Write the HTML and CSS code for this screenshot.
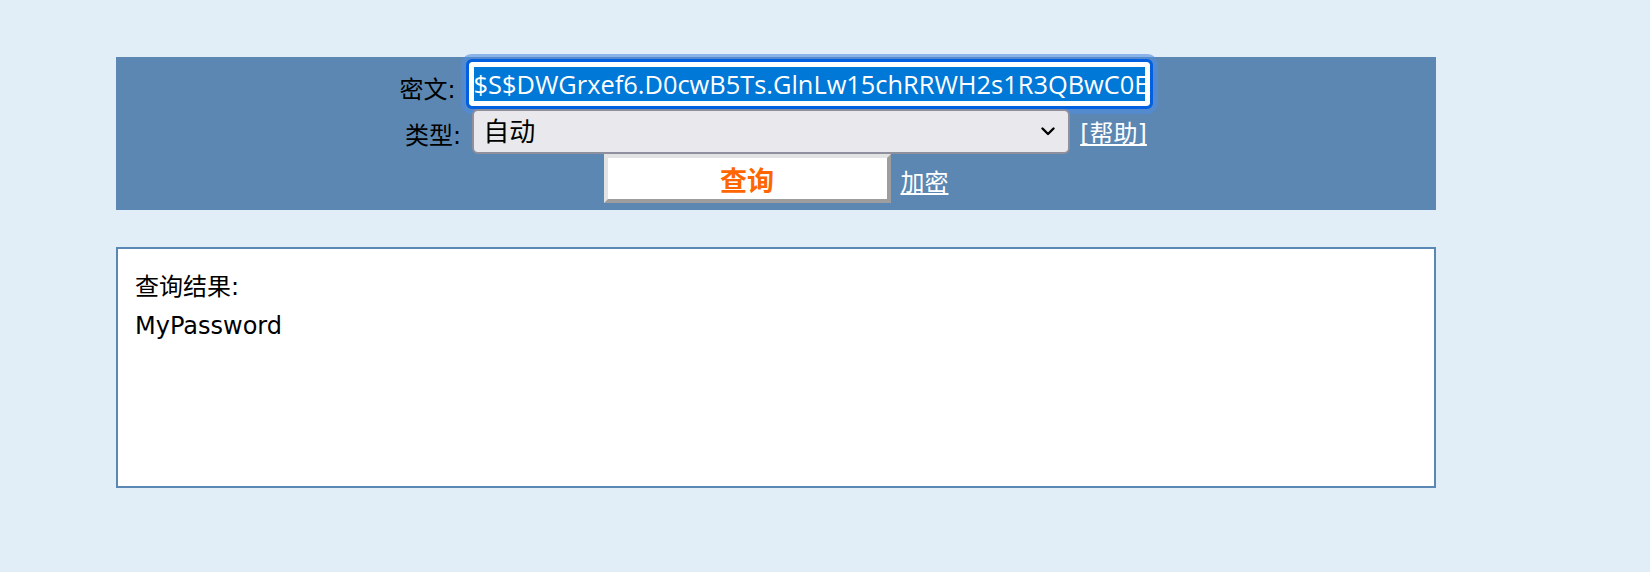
FILE: index.html
```html
<!DOCTYPE html>
<html lang="zh-CN">
<head>
<meta charset="utf-8">
<title>密文查询</title>
<link rel="stylesheet" href="styles.css">
</head>
<body>
<div class="page">
  <form class="panel">
    <div class="row">
      <label class="lbl">密文:</label>
      <input class="cipher" type="text" value="$S$DWGrxef6.D0cwB5Ts.GlnLw15chRRWH2s1R3QBwC0E7bNq">
    </div>
    <div class="row">
      <label class="lbl lbl-type">类型:</label>
      <span class="select-wrap">
        <select class="type"><option>自动</option></select>
        <svg class="chev" width="14" height="9" viewBox="0 0 14 9"><path d="M1.5 1.5 L7 7 L12.5 1.5" fill="none" stroke="#000" stroke-width="2.4" stroke-linecap="round" stroke-linejoin="round"/></svg>
      </span>
      <a class="help" href="#">[帮助]</a>
    </div>
    <div class="row">
      <button class="query" type="button">查询</button>
      <a class="enc" href="#">加密</a>
    </div>
  </form>
  <div class="result">查询结果:<br>MyPassword</div>
</div>
</body>
</html>
```
FILE: styles.css
```css
body {
  margin: 0;
  background: #e1eef7;
  font-family: "DejaVu Sans", "Noto Sans CJK SC", sans-serif;
  font-size: 24px;
  color: #000;
}
.page {
  width: 1320px;
  margin: 57px 0 0 116px;
}
.panel {
  background: #5b87b2;
  padding: 2px 0 7px;
  display: flex;
  flex-direction: column;
  align-items: center;
  margin: 0;
}
.row {
  display: flex;
  align-items: center;
}
.lbl {
  margin-right: 10px;
  padding-top: 6px;
}
.lbl-type {
  margin-right: 11px;
  padding-top: 4px;
}
.cipher {
  box-sizing: border-box;
  width: 687px;
  height: 50px;
  border: 3px solid #0060df;
  border-radius: 6px;
  padding: 0 5px;
  background: #0078d7;
  box-shadow: inset 0 0 0 5px #fff, 0 0 0 5px rgba(80, 140, 225, 0.6);
  color: #fff;
  font: 25.4px "Open Sans", sans-serif;
  outline: none;
  margin: 0;
}
.select-wrap {
  position: relative;
  display: flex;
}
.type {
  appearance: none;
  -webkit-appearance: none;
  box-sizing: border-box;
  width: 598px;
  height: 45px;
  border: 2px solid #8f8f9d;
  border-radius: 6px;
  background: #e9e9ed;
  padding: 0 40px 0 9px;
  font: 26px "DejaVu Sans", "Noto Sans CJK SC", sans-serif;
  color: #000;
  margin: 0;
}
.chev {
  position: absolute;
  right: 15px;
  top: 18px;
  pointer-events: none;
}
.help {
  color: #fff;
  margin-left: 10px;
  text-decoration-skip-ink: none;
}
.query {
  box-sizing: border-box;
  width: 287px;
  height: 49px;
  background: #fff;
  border: 4px solid;
  border-color: #e3e3e3 #9d9d9d #9d9d9d #e3e3e3;
  color: #ff6600;
  font: bold 27px "DejaVu Sans", "Noto Sans CJK SC", sans-serif;
  padding: 2px 0 0;
  margin: 0;
}
.enc {
  color: #fff;
  margin-left: 10px;
  padding-top: 4px;
  text-decoration-skip-ink: none;
}
.result {
  margin-top: 37px;
  box-sizing: border-box;
  height: 241px;
  border: 2px solid #5b87b4;
  background: #fff;
  padding: 19px 17px;
  line-height: 39px;
}
```
